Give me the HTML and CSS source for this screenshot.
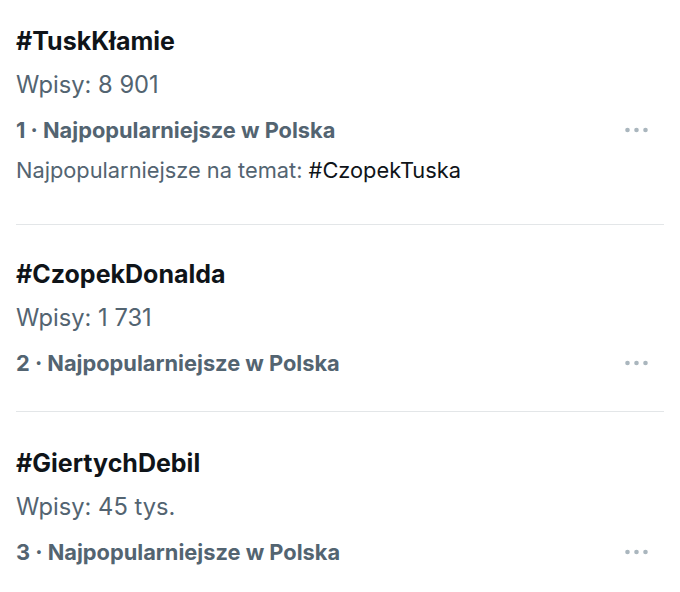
FILE: index.html
```html
<!DOCTYPE html>
<html lang="pl">
<head>
<meta charset="utf-8">
<link rel="stylesheet" href="styles.css">
</head>
<body>
<div class="list">
  <div class="trend first">
    <div class="title">#TuskKłamie</div>
    <div class="count">Wpisy: 8 901</div>
    <div class="rank-row">
      <span class="rank">1 · Najpopularniejsze w Polska</span>
      <svg class="dots" width="23" height="6" viewBox="0 0 23 6"><circle cx="2.5" cy="3" r="2.3"/><circle cx="11.5" cy="3" r="2.3"/><circle cx="20.5" cy="3" r="2.3"/></svg>
    </div>
    <div class="topic">Najpopularniejsze na temat: <span class="tag">#CzopekTuska</span></div>
  </div>
  <div class="trend second">
    <div class="title">#CzopekDonalda</div>
    <div class="count">Wpisy: 1 731</div>
    <div class="rank-row">
      <span class="rank">2 · Najpopularniejsze w Polska</span>
      <svg class="dots" width="23" height="6" viewBox="0 0 23 6"><circle cx="2.5" cy="3" r="2.3"/><circle cx="11.5" cy="3" r="2.3"/><circle cx="20.5" cy="3" r="2.3"/></svg>
    </div>
  </div>
  <div class="trend last">
    <div class="title">#GiertychDebil</div>
    <div class="count">Wpisy: 45 tys.</div>
    <div class="rank-row">
      <span class="rank">3 · Najpopularniejsze w Polska</span>
      <svg class="dots" width="23" height="6" viewBox="0 0 23 6"><circle cx="2.5" cy="3" r="2.3"/><circle cx="11.5" cy="3" r="2.3"/><circle cx="20.5" cy="3" r="2.3"/></svg>
    </div>
  </div>
</div>
</body>
</html>
```
FILE: styles.css
```css
html, body {
  margin: 0;
  padding: 0;
  background: #ffffff;
}
body {
  font-family: Inter, "Liberation Sans", Arial, sans-serif;
  width: 680px;
  height: 592px;
  overflow: hidden;
}
.list {
  padding: 0 16px;
}
.trend {
  border-bottom: 1px solid #e3e6e8;
}
.trend.first {
  padding-top: 23px;
  padding-bottom: 33px;
}
.trend.second {
  padding-top: 31px;
  padding-bottom: 29px;
}
.trend.last {
  padding-top: 33px;
  border-bottom: none;
}
.title {
  font-size: 25px;
  font-weight: 700;
  color: #0f1419;
  line-height: 36px;
}
.count {
  font-size: 23.7px;
  color: #536471;
  line-height: 52px;
}
.rank-row {
  display: flex;
  align-items: center;
  justify-content: space-between;
  height: 38px;
}
.rank {
  font-size: 21.8px;
  font-weight: 700;
  color: #536471;
}
.dots {
  fill: #aab6be;
  margin-right: 16px;
}
.topic {
  font-size: 21.8px;
  color: #536471;
  line-height: 42px;
}
.tag {
  color: #0f1419;
}
```
